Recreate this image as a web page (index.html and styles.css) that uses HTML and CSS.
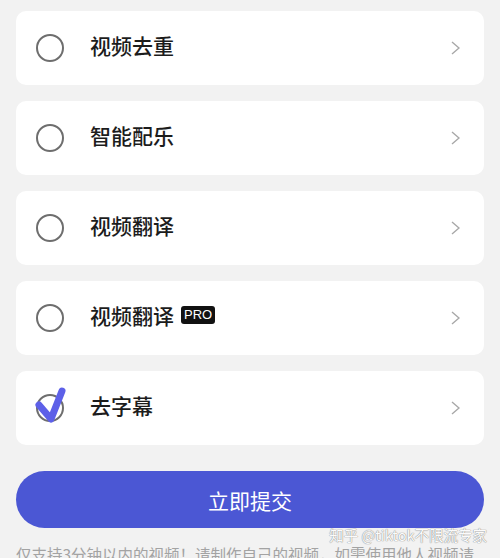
FILE: index.html
```html
<!DOCTYPE html>
<html lang="zh-CN">
<head>
    <meta charset="UTF-8">
    <meta name="viewport" content="width=device-width, initial-scale=1.0">
    <title>视频处理</title>
    <link rel="stylesheet" href="styles.css">
</head>
<body>
    <div class="container">
        <div class="option-list">
            <div class="option">
                <span class="radio"></span>
                <span class="option-name">视频去重</span>
                <svg class="arrow" width="9" height="14" viewBox="0 0 9 14"><polyline points="1,1 8,7 1,13" /></svg>
            </div>
            <div class="option">
                <span class="radio"></span>
                <span class="option-name">智能配乐</span>
                <svg class="arrow" width="9" height="14" viewBox="0 0 9 14"><polyline points="1,1 8,7 1,13" /></svg>
            </div>
            <div class="option">
                <span class="radio"></span>
                <span class="option-name">视频翻译</span>
                <svg class="arrow" width="9" height="14" viewBox="0 0 9 14"><polyline points="1,1 8,7 1,13" /></svg>
            </div>
            <div class="option">
                <span class="radio"></span>
                <span class="option-name">视频翻译</span>
                <span class="pro">PRO</span>
                <svg class="arrow" width="9" height="14" viewBox="0 0 9 14"><polyline points="1,1 8,7 1,13" /></svg>
            </div>
            <div class="option">
                <span class="radio checked">
                    <svg class="check" width="28" height="28" viewBox="0 0 28 28"><polyline points="3,11 15,25 26,-3" /></svg>
                </span>
                <span class="option-name">去字幕</span>
                <svg class="arrow" width="9" height="14" viewBox="0 0 9 14"><polyline points="1,1 8,7 1,13" /></svg>
            </div>
        </div>

        <button type="button" class="submit">立即提交</button>

        <p class="note">仅支持3分钟以内的视频！请制作自己的视频，如需使用他人视频请</p>
    </div>

    <div class="watermark">知乎 @tiktok不限流专家</div>
</body>
</html>
```

FILE: styles.css
```css
body {
    margin: 0;
    background-color: #f2f2f2;
    font-family: "Noto Sans CJK SC", "Noto Sans", sans-serif;
    color: #1c1c1c;
    height: 558px;
    overflow: hidden;
    position: relative;
}

.container {
    padding: 11px 16px 0;
}

.option-list {
    display: flex;
    flex-direction: column;
    gap: 16px;
}

.option {
    display: flex;
    align-items: center;
    height: 74px;
    padding: 0 24px 0 20px;
    background-color: #fff;
    border-radius: 10px;
}

.radio {
    position: relative;
    width: 24px;
    height: 24px;
    border: 2px solid #6e6e6e;
    border-radius: 50%;
    flex-shrink: 0;
    margin-right: 26px;
}

.check {
    position: absolute;
    top: -2px;
    left: -2px;
    overflow: visible;
}

.check polyline {
    fill: none;
    stroke: #5d60e8;
    stroke-width: 7;
    stroke-linecap: round;
    stroke-linejoin: round;
}

.option-name {
    font-size: 21px;
    font-weight: 500;
    line-height: 28px;
    margin-top: -6px;
}

.pro {
    margin: -6px 0 0 7px;
    padding: 0 3px;
    height: 18px;
    line-height: 18px;
    background-color: #111;
    color: #fff;
    border-radius: 3px;
    font-family: "Liberation Sans", sans-serif;
    font-size: 13px;
}

.arrow {
    margin-left: auto;
}

.arrow polyline {
    fill: none;
    stroke: #a8a8a8;
    stroke-width: 1.4;
}

.submit {
    display: block;
    width: 100%;
    height: 57px;
    margin-top: 26px;
    border: none;
    border-radius: 29px;
    background-color: #4b57d4;
    color: #fff;
    font-family: "Noto Sans CJK SC", sans-serif;
    font-size: 21px;
    cursor: pointer;
}

.note {
    margin: 15px 0 0;
    font-size: 15.5px;
    line-height: 22px;
    color: #a3a3a3;
    white-space: nowrap;
}

.watermark {
    position: absolute;
    top: 524px;
    right: 13px;
    font-size: 14.5px;
    color: #fbfbfb;
    text-shadow: 0 0 1px #8a8a8a, 0 0 1px #8a8a8a;
}
```
